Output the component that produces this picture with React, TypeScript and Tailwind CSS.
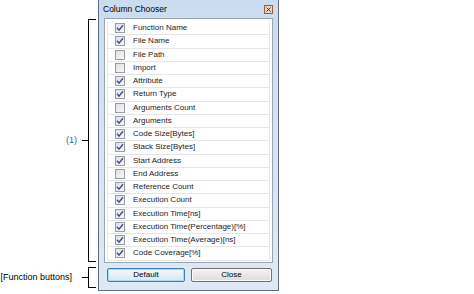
const columns: { label: string; checked: boolean }[] = [
  { label: "Function Name", checked: true },
  { label: "File Name", checked: true },
  { label: "File Path", checked: false },
  { label: "Import", checked: false },
  { label: "Attribute", checked: true },
  { label: "Return Type", checked: true },
  { label: "Arguments Count", checked: false },
  { label: "Arguments", checked: true },
  { label: "Code Size[Bytes]", checked: true },
  { label: "Stack Size[Bytes]", checked: true },
  { label: "Start Address", checked: true },
  { label: "End Address", checked: false },
  { label: "Reference Count", checked: true },
  { label: "Execution Count", checked: true },
  { label: "Execution Time[ns]", checked: true },
  { label: "Execution Time(Percentage)[%]", checked: true },
  { label: "Execution Time(Average)[ns]", checked: true },
  { label: "Code Coverage[%]", checked: true },
];

function CheckBox({ checked }: { checked: boolean }) {
  return (
    <div className="w-[10px] h-[10px] shrink-0 border border-[#9a9ca0] bg-gradient-to-br from-[#dfe0e2] to-[#f8f8f8] flex items-center justify-center">
      {checked && (
        <svg width="8" height="8" viewBox="0 0 8 8">
          <path d="M1 3.8 L3 6.2 L7 1.2" fill="none" stroke="#3d4b92" strokeWidth="1.4" />
        </svg>
      )}
    </div>
  );
}

function Bracket({
  label,
  className,
  labelClass,
}: {
  label: string;
  className: string;
  labelClass: string;
}) {
  return (
    <div className={`flex items-center justify-end pr-[2px] ${className}`}>
      <span className={`text-[9px] leading-none whitespace-nowrap ${labelClass}`}>{label}</span>
      <div className="w-[6px] h-px bg-black" />
      <div className="h-full w-[8px] border-l border-y border-black" />
    </div>
  );
}

export default function App() {
  return (
    <div
      className="w-[474px] h-[294px] bg-white flex text-[#1b1b1b]"
      style={{ fontFamily: '"Liberation Sans", Arial, sans-serif' }}
    >
      {/* annotations */}
      <div className="w-[98px] flex flex-col pt-[19px]">
        <Bracket label="(1)" className="h-[243px]" labelClass="text-[#2a64b0] mr-[5px]" />
        <Bracket
          label="[Function buttons]"
          className="h-[21px] mt-[5px]"
          labelClass="text-black mr-[10px]"
        />
      </div>

      {/* window */}
      <div className="w-[181px] h-[291px] border-x border-b border-[#5d6e82] bg-gradient-to-b from-[#cbdcf0] via-[#d6e3f3] to-[#dfe9f5] flex flex-col">
        <div className="h-[18px] flex items-center justify-between pl-[4px] pr-[5px]">
          <span className="text-[8.5px] leading-none text-black">Column Chooser</span>
          <div className="w-[9px] h-[9px] border border-[#9a5a3a] bg-[#e9d2c2] flex items-center justify-center">
            <svg width="5" height="5" viewBox="0 0 5 5">
              <path d="M0.5 0.5 L4.5 4.5 M4.5 0.5 L0.5 4.5" stroke="#5a3020" strokeWidth="1" />
            </svg>
          </div>
        </div>

        <div className="mx-[5px] h-[245px] border border-[#9aa4b0] bg-white p-[1px] pt-[3px]">
          {columns.map((c) => (
            <div
              key={c.label}
              className="h-[13.25px] flex items-center pl-[7px] gap-[8px] border-x border-b border-[#e6e6e6] mx-px"
            >
              <CheckBox checked={c.checked} />
              <span className="text-[8px] leading-none whitespace-nowrap">{c.label}</span>
            </div>
          ))}
        </div>

        <div className="flex gap-[6px] pl-[8px] pr-[6px] mt-[5px]">
          <button className="w-[78px] h-[14px] rounded-[2px] border border-[#3c7fb1] bg-gradient-to-b from-[#f4f8fb] to-[#d9e6f0] text-[8px] leading-none text-black shadow-[inset_0_0_0_1px_#a9daf3]">
            Default
          </button>
          <button className="w-[81px] h-[14px] rounded-[2px] border border-[#707070] bg-gradient-to-b from-[#f3f3f3] to-[#dcdcdc] text-[8px] leading-none text-black shadow-[inset_0_0_0_1px_#fafafa]">
            Close
          </button>
        </div>
      </div>
    </div>
  );
}
